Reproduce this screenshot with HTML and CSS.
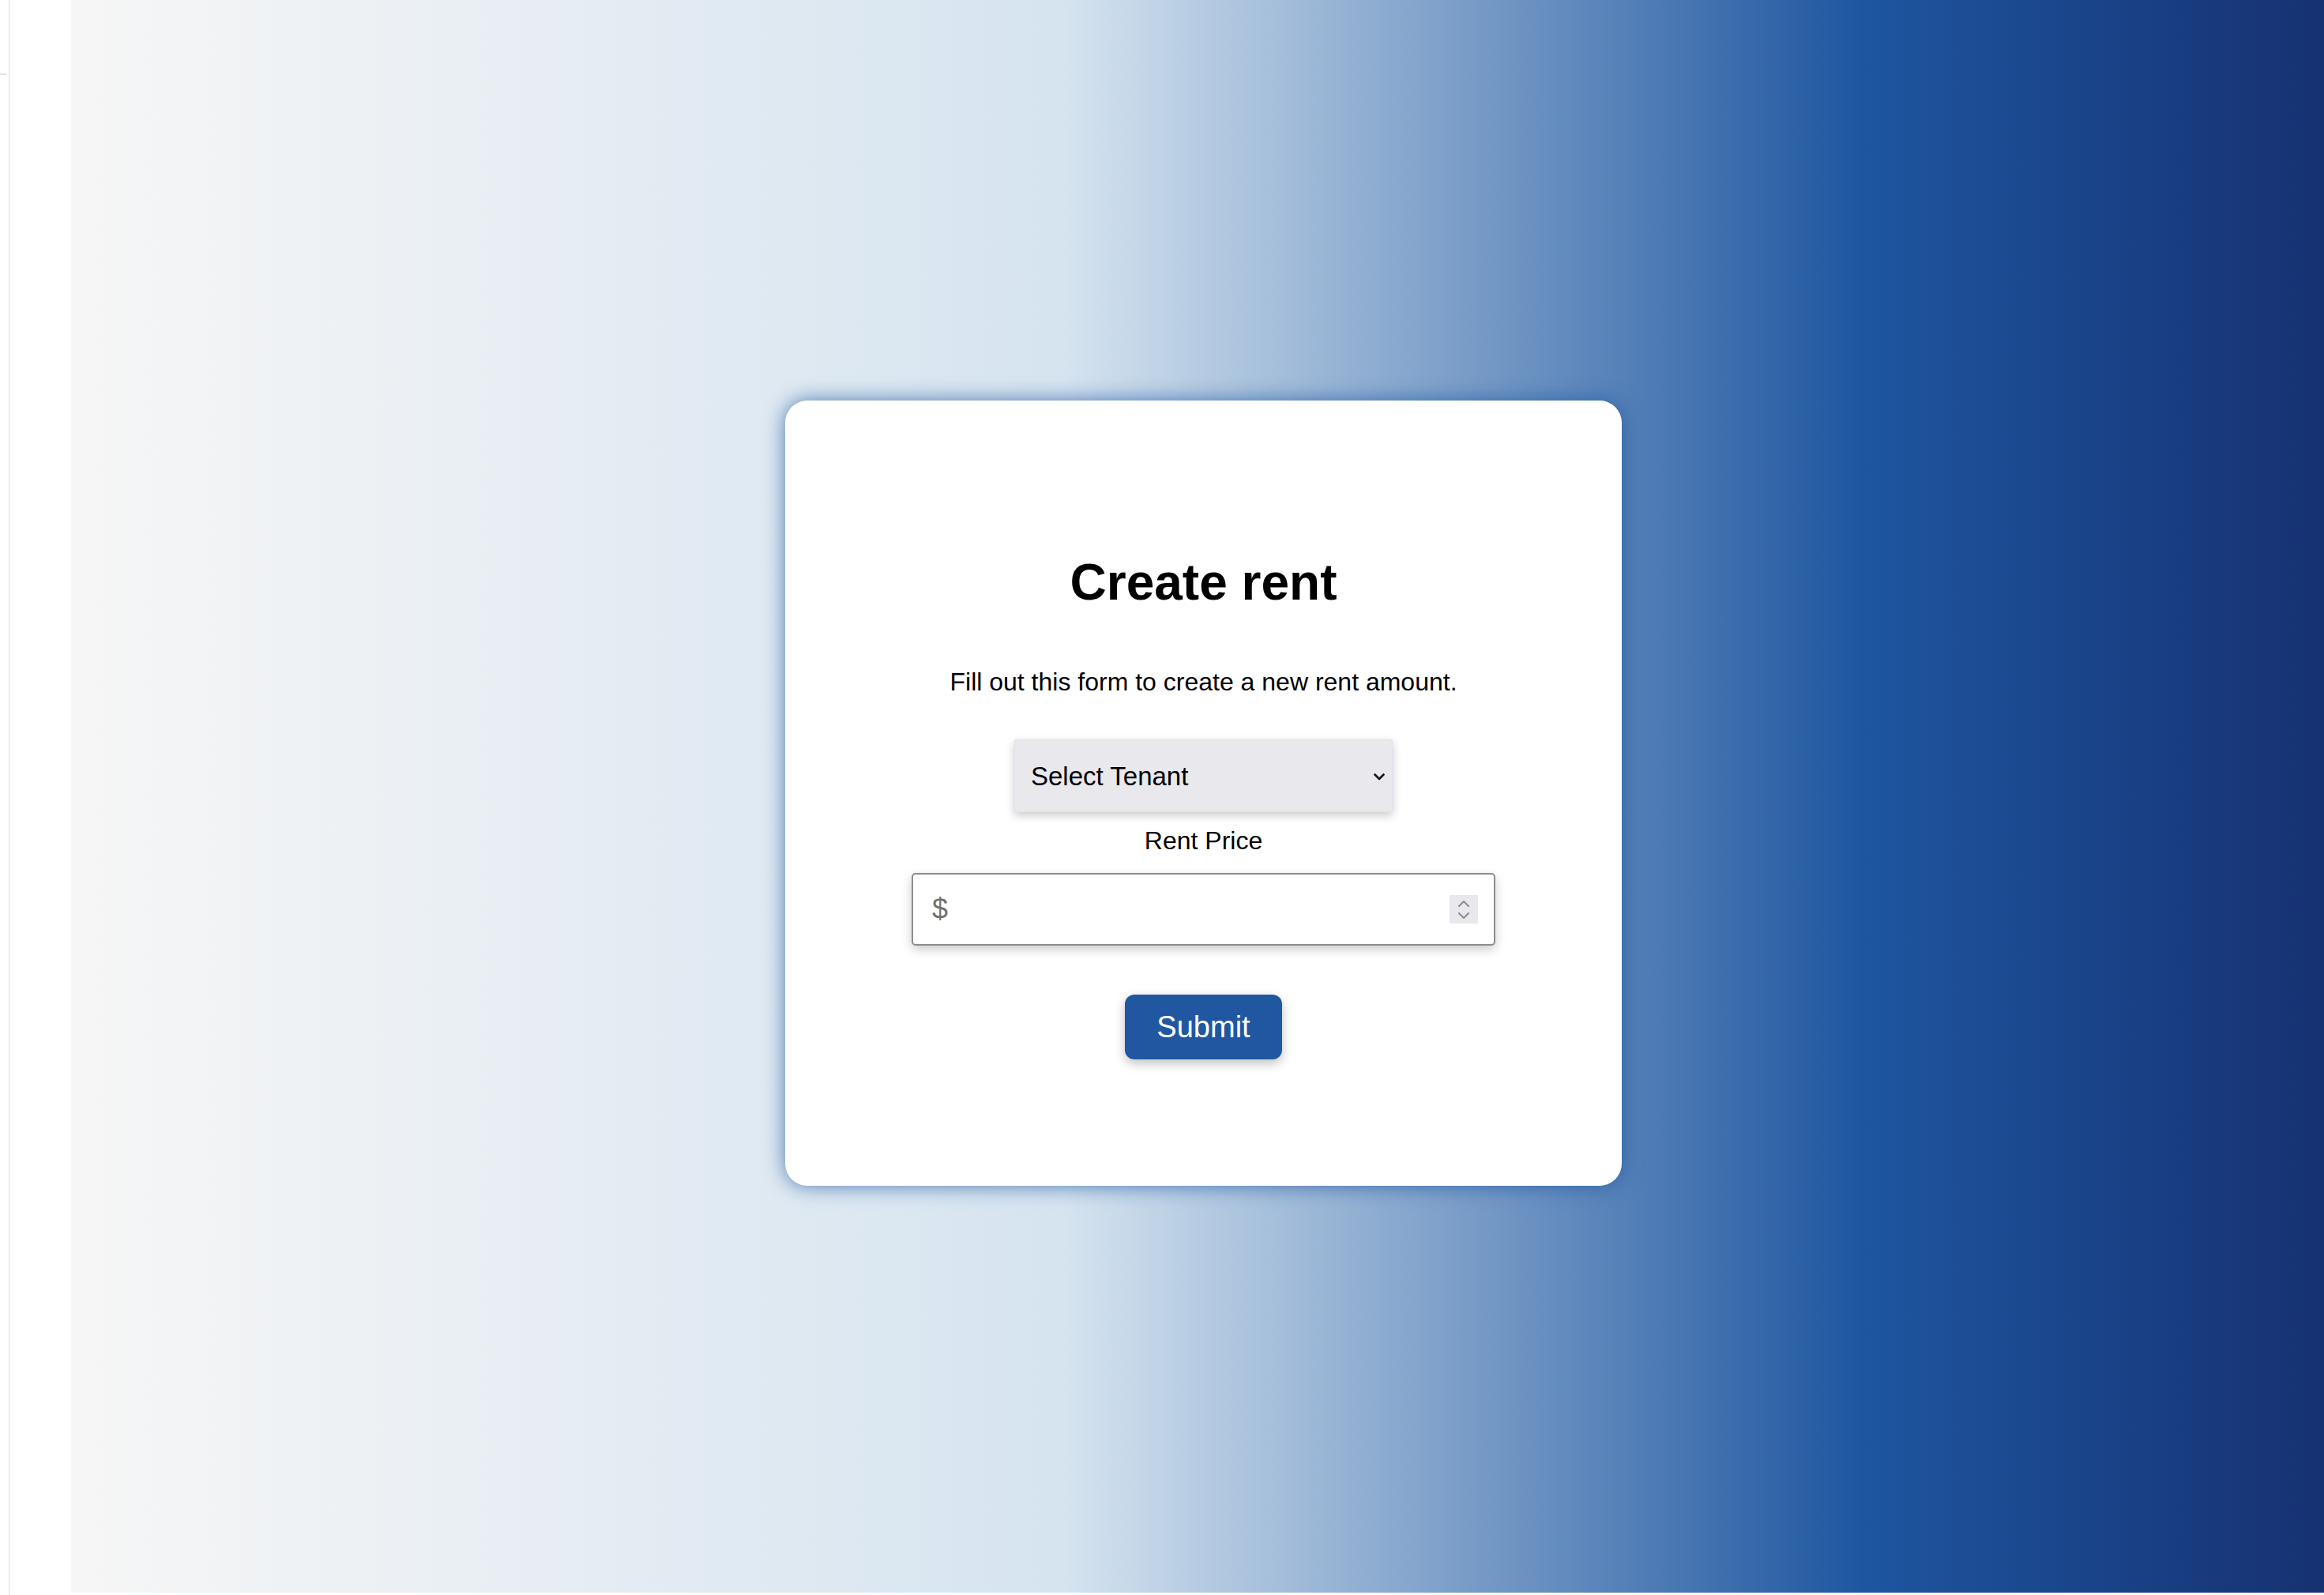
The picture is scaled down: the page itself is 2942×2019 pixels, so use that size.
FILE: index.html
```html
<!DOCTYPE html>
<html lang="en">
<head>
<meta charset="utf-8">
<title>Create rent</title>
<link rel="stylesheet" href="styles.css">
</head>
<body>
<div class="page">
  <aside class="rail">
    <div class="rail-mark"></div>
    <div class="rail-line"></div>
  </aside>
  <main class="stage">
    <form class="card">
      <h1 class="title">Create rent</h1>
      <p class="lead">Fill out this form to create a new rent amount.</p>
      <div class="select-wrap">
        <select class="select">
          <option>Select Tenant</option>
        </select>
        <svg class="select-chev" width="14" height="9" viewBox="0 0 14 9"><path d="M1.5 1.5 L7 7 L12.5 1.5" fill="none" stroke="#111" stroke-width="2.6" stroke-linecap="round" stroke-linejoin="round"/></svg>
      </div>
      <label class="label" for="price">Rent Price</label>
      <div class="input-wrap">
        <input id="price" class="input" type="text" placeholder="$">
        <span class="spinner">
          <svg width="36" height="36" viewBox="0 0 36 36"><path d="M12 14 L18 8 L24 14" fill="none" stroke="#8e8e93" stroke-width="2.2" stroke-linecap="round" stroke-linejoin="round"/><path d="M12 23 L18 29 L24 23" fill="none" stroke="#8e8e93" stroke-width="2.2" stroke-linecap="round" stroke-linejoin="round"/></svg>
        </span>
      </div>
      <button class="submit" type="button">Submit</button>
    </form>
  </main>
</div>
</body>
</html>
```
FILE: styles.css
```css
html, body {
  margin: 0;
  padding: 0;
  background: #ffffff;
}
body {
  font-family: "Liberation Sans", Arial, Helvetica, sans-serif;
  color: #000;
  width: 2942px;
  height: 2019px;
  overflow: hidden;
}
.page {
  display: flex;
  align-items: flex-start;
  height: 2019px;
}
.rail {
  width: 90px;
  height: 2019px;
  flex: none;
  display: flex;
  align-items: flex-start;
}
.rail-mark {
  width: 8px;
  height: 2px;
  margin-top: 93px;
  background: #e2e2e2;
  flex: none;
}
.rail-line {
  width: 1px;
  height: 2019px;
  margin-left: 3px;
  background: #e0e0e0;
  flex: none;
}
.stage {
  flex: 1;
  height: 2016px;
  box-sizing: border-box;
  padding-left: 15px;
  padding-bottom: 8px;
  display: flex;
  align-items: center;
  justify-content: center;
  background: linear-gradient(to right, #f6f6f6 0%, #d6e4f0 44%, #1e56a0 79.5%, #163172 100%);
}
.card {
  width: 1059px;
  height: 994px;
  box-sizing: border-box;
  padding: 193px 0 160px;
  background: #ffffff;
  border-radius: 28px;
  box-shadow: 0 0 26px rgba(30, 86, 160, 0.75);
  display: flex;
  flex-direction: column;
  align-items: center;
}
.title {
  margin: 0;
  font-size: 64px;
  line-height: 74px;
  font-weight: 700;
}
.lead {
  margin: 71px 0 0;
  font-size: 32px;
  line-height: 37px;
}
.select-wrap {
  position: relative;
  margin-top: 54px;
  width: 479px;
  height: 92px;
}
.select {
  -webkit-appearance: none;
  appearance: none;
  width: 100%;
  height: 100%;
  box-sizing: border-box;
  margin: 0;
  padding: 0 0 0 20px;
  border: 1px solid #dde3ee;
  border-radius: 2px;
  background: #e8e8ed;
  font-family: "Liberation Sans", Arial, sans-serif;
  font-size: 33px;
  color: #000;
  box-shadow: 0 4px 12px rgba(0, 0, 0, 0.22);
  outline: none;
}
.select-chev {
  position: absolute;
  right: 10px;
  top: 43px;
  pointer-events: none;
}
.label {
  margin-top: 18px;
  font-size: 32px;
  line-height: 37px;
}
.input-wrap {
  position: relative;
  margin-top: 22px;
  width: 739px;
  height: 92px;
}
.input {
  width: 100%;
  height: 100%;
  box-sizing: border-box;
  margin: 0;
  padding: 0 0 0 24px;
  border: 2px solid #8c8c91;
  border-radius: 5px;
  background: #ffffff;
  font-family: "Liberation Sans", Arial, sans-serif;
  font-size: 36px;
  color: #000;
  box-shadow: 0 5px 14px rgba(0, 0, 0, 0.2);
  outline: none;
}
.input::placeholder {
  color: #707070;
}
.spinner {
  position: absolute;
  right: 22px;
  top: 28px;
  width: 36px;
  height: 36px;
  background: #e8e8ed;
  display: flex;
  pointer-events: none;
}
.submit {
  margin-top: 62px;
  width: 199px;
  height: 82px;
  border: none;
  border-radius: 12px;
  background: #2057a0;
  color: #ffffff;
  font-family: "Liberation Sans", Arial, sans-serif;
  font-size: 38px;
  padding: 0;
  box-shadow: 0 5px 14px rgba(0, 0, 0, 0.25);
  cursor: pointer;
}
```
